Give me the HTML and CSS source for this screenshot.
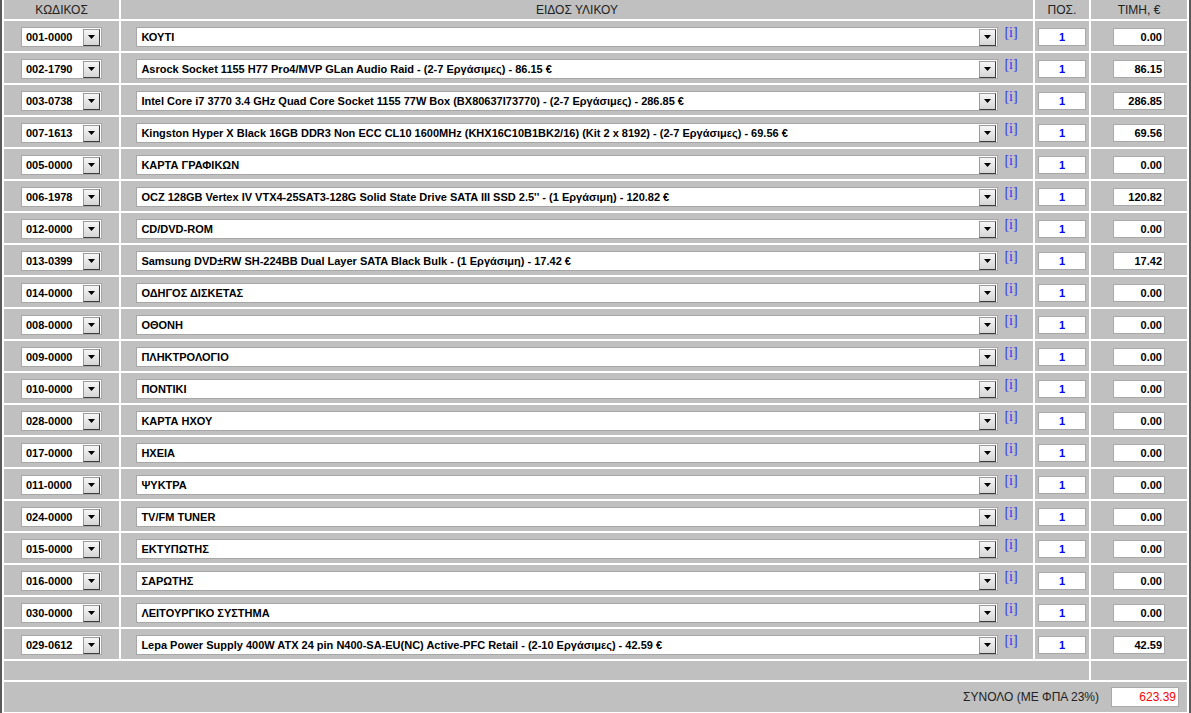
FILE: index.html
```
<!DOCTYPE html>
<html lang="el">
<head>
    <meta charset="UTF-8">
    <meta name="viewport" content="width=device-width, initial-scale=1.0">
    <title>Σύνθεση Υπολογιστή</title>
    <link rel="stylesheet" href="styles.css">
</head>
<body>
    <table class="parts">
        <colgroup>
            <col class="col-code">
            <col class="col-desc">
            <col class="col-qty">
            <col class="col-price">
        </colgroup>
        <thead>
            <tr>
                <th>ΚΩΔΙΚΟΣ</th>
                <th>ΕΙΔΟΣ ΥΛΙΚΟΥ</th>
                <th>ΠΟΣ.</th>
                <th>ΤΙΜΗ, €</th>
            </tr>
        </thead>
        <tbody id="partRows"></tbody>
        <tfoot>
            <tr class="spacer">
                <td colspan="3"></td>
                <td></td>
            </tr>
            <tr class="sum-row">
                <td colspan="4">
                    <div class="sum-box">
                        <span>ΣΥΝΟΛΟ (ΜΕ ΦΠΑ 23%)</span>
                        <input type="text" id="grandTotal" class="sum-input" readonly>
                    </div>
                </td>
            </tr>
        </tfoot>
    </table>

    <script>
        const parts = [
            { code: '001-0000', name: 'ΚΟΥΤΙ', price: 0 },
            { code: '002-1790', name: 'Asrock Socket 1155 H77 Pro4/MVP GLan Audio Raid - (2-7 Εργάσιμες) - 86.15 €', price: 86.15 },
            { code: '003-0738', name: 'Intel Core i7 3770 3.4 GHz Quad Core Socket 1155 77W Box (BX80637I73770) - (2-7 Εργάσιμες) - 286.85 €', price: 286.85 },
            { code: '007-1613', name: 'Kingston Hyper X Black 16GB DDR3 Non ECC CL10 1600MHz (KHX16C10B1BK2/16) (Kit 2 x 8192) - (2-7 Εργάσιμες) - 69.56 €', price: 69.56 },
            { code: '005-0000', name: 'ΚΑΡΤΑ ΓΡΑΦΙΚΩΝ', price: 0 },
            { code: '006-1978', name: 'OCZ 128GB Vertex IV VTX4-25SAT3-128G Solid State Drive SATA III SSD 2.5\'\' - (1 Εργάσιμη) - 120.82 €', price: 120.82 },
            { code: '012-0000', name: 'CD/DVD-ROM', price: 0 },
            { code: '013-0399', name: 'Samsung DVD±RW SH-224BB Dual Layer SATA Black Bulk - (1 Εργάσιμη) - 17.42 €', price: 17.42 },
            { code: '014-0000', name: 'ΟΔΗΓΟΣ ΔΙΣΚΕΤΑΣ', price: 0 },
            { code: '008-0000', name: 'ΟΘΟΝΗ', price: 0 },
            { code: '009-0000', name: 'ΠΛΗΚΤΡΟΛΟΓΙΟ', price: 0 },
            { code: '010-0000', name: 'ΠΟΝΤΙΚΙ', price: 0 },
            { code: '028-0000', name: 'ΚΑΡΤΑ ΗΧΟΥ', price: 0 },
            { code: '017-0000', name: 'ΗΧΕΙΑ', price: 0 },
            { code: '011-0000', name: 'ΨΥΚΤΡΑ', price: 0 },
            { code: '024-0000', name: 'TV/FM TUNER', price: 0 },
            { code: '015-0000', name: 'ΕΚΤΥΠΩΤΗΣ', price: 0 },
            { code: '016-0000', name: 'ΣΑΡΩΤΗΣ', price: 0 },
            { code: '030-0000', name: 'ΛΕΙΤΟΥΡΓΙΚΟ ΣΥΣΤΗΜΑ', price: 0 },
            { code: '029-0612', name: 'Lepa Power Supply 400W ATX 24 pin N400-SA-EU(NC) Active-PFC Retail - (2-10 Εργάσιμες) - 42.59 €', price: 42.59 }
        ];

        const arrow = '<span class="arrow"><svg width="7" height="4" viewBox="0 0 7 4"><path d="M0 0h7L3.5 4z" fill="#000"/></svg></span>';

        let rowsHTML = '';
        let total = 0;

        parts.forEach(part => {
            total += part.price;
            rowsHTML += `
                <tr>
                    <td>
                        <span class="combo combo-code">
                            <select><option>${part.code}</option></select>${arrow}
                        </span>
                    </td>
                    <td>
                        <div class="desc-box">
                            <span class="combo combo-desc">
                                <select><option>${part.name}</option></select>${arrow}
                            </span>
                            <a class="info" href="#">[i]</a>
                        </div>
                    </td>
                    <td><input type="text" class="qty" value="1"></td>
                    <td><input type="text" class="price" value="${part.price.toFixed(2)}" readonly></td>
                </tr>
            `;
        });

        document.getElementById('partRows').innerHTML = rowsHTML;
        document.getElementById('grandTotal').value = total.toFixed(2);
    </script>
</body>
</html>
```

FILE: styles.css
```
body {
    margin: 0;
    background: #fff;
    font-family: "Liberation Sans", Arial, sans-serif;
    font-size: 11px;
}
.parts {
    width: 1189px;
    margin-top: -2px;
    table-layout: fixed;
    border-collapse: separate;
    border-spacing: 2px;
    background: #fff;
    border-left: 2px solid #5a5a5a;
    border-right: 2px solid #5a5a5a;
}
.col-code { width: 115px; }
.col-desc { width: 912px; }
.col-qty { width: 54px; }
.col-price { width: 96px; }
th, td {
    background: #c0c0c0;
    padding: 0;
    text-align: center;
    vertical-align: middle;
}
th {
    height: 19px;
    font-weight: normal;
    font-size: 12px;
    color: #222;
}
tbody td {
    height: 28px;
    padding-top: 2px;
}
.combo {
    display: inline-flex;
    align-items: center;
    height: 18px;
    padding: 0 1px 0 0;
    border: 1px solid #a7a7a7;
    background: #fff;
    vertical-align: middle;
}
.combo select {
    flex: 1;
    min-width: 0;
    height: 18px;
    padding: 0 0 0 4px;
    border: none;
    background: #fff;
    font-family: "Liberation Sans", Arial, sans-serif;
    font-size: 11px;
    font-weight: bold;
    color: #000;
    -webkit-appearance: none;
    appearance: none;
    outline: none;
}
.combo-code { width: 78px; }
.combo-desc { width: 859px; }
.arrow {
    display: flex;
    align-items: center;
    justify-content: center;
    width: 15px;
    height: 15px;
    border: 1px solid;
    border-color: #9a9a9a #3c3c3c #3c3c3c #9a9a9a;
    background: linear-gradient(#f6f6f6, #d6d6d6);
}
.desc-box {
    display: flex;
    justify-content: center;
    align-items: flex-start;
}
.info {
    margin: -1px 0 0 6px;
    font-family: "Liberation Serif", "Times New Roman", serif;
    font-size: 14px;
    line-height: 14px;
    color: #3232ff;
    text-decoration: none;
}
.qty, .price, .sum-input {
    box-sizing: border-box;
    height: 18px;
    padding: 0 2px;
    border: 1px solid #a9a9a9;
    background: #fff;
    font-family: "Liberation Sans", Arial, sans-serif;
    font-size: 11px;
    font-weight: bold;
    vertical-align: middle;
    outline: none;
}
.qty {
    width: 48px;
    text-align: center;
    color: #0000ff;
}
.price {
    width: 52px;
    text-align: right;
    color: #000;
}
.spacer td {
    height: 19px;
}
.sum-row td {
    height: 30px;
}
.sum-box {
    display: flex;
    justify-content: flex-end;
    align-items: center;
    gap: 12px;
    padding-right: 8px;
    font-size: 12px;
    color: #222;
}
.sum-input {
    width: 68px;
    height: 20px;
    text-align: right;
    font-size: 12px;
    font-weight: normal;
    color: #ff0000;
}
```
